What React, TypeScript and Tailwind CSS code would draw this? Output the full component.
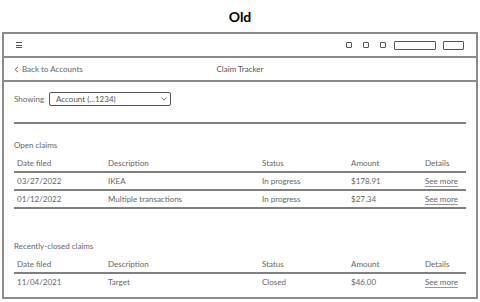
import React from 'react';

const cols = ['w-[91px]', 'w-[154px]', 'w-[89px]', 'w-[74px]', 'flex-1'];

function Row({ cells, head }: { cells: string[]; head?: boolean }) {
  return (
    <>
      <div className={`flex h-[16px] pl-[3px] ${head ? 'items-end pb-[2px]' : 'items-center'}`}>
        {cells.map((c, i) => (
          <div key={i} className={cols[i]}>
            {i === 4 && !head ? (
              <span className="underline decoration-[#999] underline-offset-[1.5px]">{c}</span>
            ) : (
              c
            )}
          </div>
        ))}
      </div>
      <div className="h-[2px] bg-[#808080]" />
    </>
  );
}

export default function App() {
  const header = ['Date filed', 'Description', 'Status', 'Amount', 'Details'];
  return (
    <div
      className="w-[480px] h-[302px] bg-white text-[#666] text-[8px] overflow-hidden"
      style={{ fontFamily: 'Lato, "Open Sans", sans-serif' }}
    >
      {/* title */}
      <div className="h-[32px] flex items-center justify-center text-[14px] font-bold text-black">
        Old
      </div>

      <div className="ml-[2px] w-[476px] h-[267px] border-2 border-[#8c8c8c]">
        {/* top bar */}
        <div className="h-[24px] border-b-2 border-[#8c8c8c] flex items-center pl-[12px] pr-[12px]">
          <div className="flex flex-col gap-[1.5px]">
            <div className="w-[6px] h-[1px] bg-[#555]" />
            <div className="w-[6px] h-[1px] bg-[#555]" />
            <div className="w-[6px] h-[1px] bg-[#555]" />
          </div>
          <div className="ml-auto flex items-center">
            <div className="w-[6px] h-[6px] border border-[#555] rounded-[1px]" />
            <div className="w-[6px] h-[6px] border border-[#555] rounded-[1px] ml-[11px]" />
            <div className="w-[6px] h-[6px] border border-[#555] rounded-[1px] ml-[11px]" />
            <div className="w-[42px] h-[9px] border border-[#555] rounded-[1px] ml-[8px]" />
            <div className="w-[21px] h-[9px] border border-[#555] rounded-[1px] ml-[7px]" />
          </div>
        </div>

        {/* nav */}
        <div className="h-[24px] border-b-2 border-[#8c8c8c] relative flex items-center pl-[10px]">
          <svg width="5" height="7" viewBox="0 0 5 7" className="mr-[3px]">
            <path d="M4 0.8 L1.2 3.5 L4 6.2" fill="none" stroke="#555" strokeWidth="1" />
          </svg>
          <span>Back to Accounts</span>
          <span className="absolute left-0 right-0 text-center text-[#555] pointer-events-none">
            Claim Tracker
          </span>
        </div>

        {/* content */}
        <div className="px-[10px]">
          <div className="mt-[10px] h-[14px] flex items-center">
            <span className="mr-[5px]">Showing</span>
            <div className="w-[122px] h-[14px] border border-[#555] rounded-[2px] flex items-center pl-[6px] pr-[3px]">
              <span className="text-[#555]">Account (...1234)</span>
              <svg width="6" height="4" viewBox="0 0 6 4" className="ml-auto">
                <path d="M0.6 0.6 L3 3.2 L5.4 0.6" fill="none" stroke="#666" strokeWidth="0.9" />
              </svg>
            </div>
          </div>

          <div className="mt-[16px] h-[2px] bg-[#808080]" />

          <div className="mt-[15px] h-[12px] flex items-center">Open claims</div>

          <div className="mt-[4px]">
            <Row head cells={header} />
            <Row cells={['03/27/2022', 'IKEA', 'In progress', '$178.91', 'See more']} />
            <Row cells={['01/12/2022', 'Multiple transactions', 'In progress', '$27.34', 'See more']} />
          </div>

          <div className="mt-[31px] h-[12px] flex items-center">Recently-closed claims</div>

          <div className="mt-[4px]">
            <Row head cells={header} />
            <div className="flex h-[16px] items-center pl-[3px]">
              {['11/04/2021', 'Target', 'Closed', '$46.00', 'See more'].map((c, i) => (
                <div key={i} className={cols[i]}>
                  {i === 4 ? (
                    <span className="underline decoration-[#999] underline-offset-[1.5px]">{c}</span>
                  ) : (
                    c
                  )}
                </div>
              ))}
            </div>
          </div>
        </div>
      </div>
    </div>
  );
}
